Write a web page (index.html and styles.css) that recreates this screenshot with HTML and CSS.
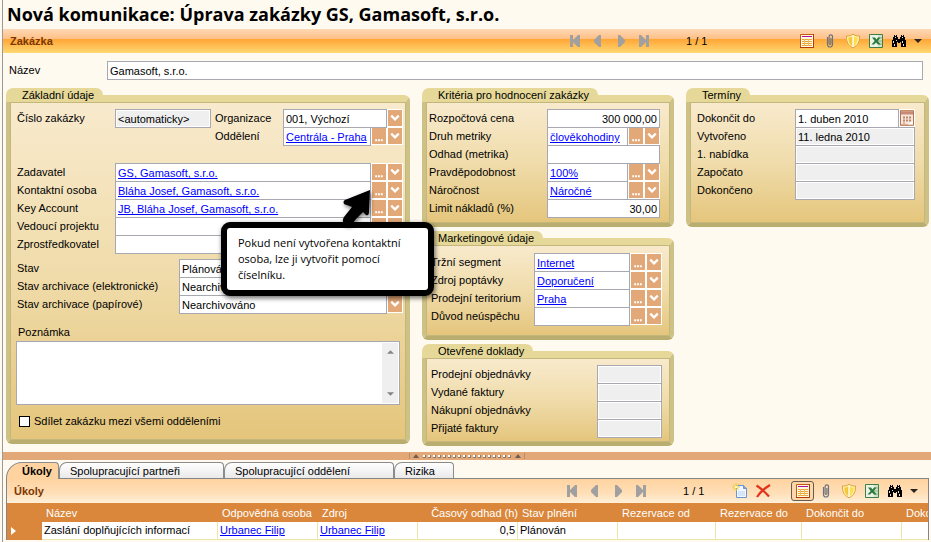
FILE: index.html
```html
<!DOCTYPE html>
<html lang="cs">
<head>
<meta charset="utf-8">
<title>Nová komunikace: Úprava zakázky</title>
<link rel="stylesheet" href="styles.css">
</head>
<body>
<svg class="sprite" aria-hidden="true">
  <symbol id="chev" viewBox="0 0 14 17"><path d="M3 6l4 4 4-4" fill="none" stroke="#fff" stroke-width="2.4"/></symbol>
  <symbol id="dots" viewBox="0 0 14 17"><path d="M3 12h2v2H3zM6 12h2v2H6zM9 12h2v2H9z" fill="#fff"/></symbol>
  <symbol id="first" viewBox="0 0 16 16"><path d="M3 2h3v5l5-5h2v12h-2L6 9v5H3z" fill="#a0a0a0"/></symbol>
  <symbol id="prev" viewBox="0 0 16 16"><path d="M11 2v12h-2L4 9V7l5-5z" fill="#a0a0a0"/></symbol>
  <symbol id="next" viewBox="0 0 16 16"><path d="M5 2v12h2l5-5V7L7 2z" fill="#a0a0a0"/></symbol>
  <symbol id="last" viewBox="0 0 16 16"><path d="M13 2h-3v5L5 2H3v12h2l5-5v5h3z" fill="#a0a0a0"/></symbol>
  <symbol id="form" viewBox="0 0 16 16"><path d="M1.500 1.500h13v13h-13z" fill="#fffbe0" stroke="#c8560c"/><path d="M3 3h10v1H3z" fill="#b010a0"/><path d="M3 6.500h10M3 8.500h10M3 10.500h10M3 12.500h10" stroke="#eba33c"/><path d="M5.500 6v7M9.500 6v7" stroke="#f0b860"/><path d="M14.500 1v13.500H1" fill="none" stroke="#b23a08"/></symbol>
  <symbol id="clip" viewBox="0 0 16 16"><path d="M5.500 4v7.500a2.500 2.500 0 0 0 5 0V3.500a1.700 1.700 0 0 0-3.400 0V10.500a.9.900 0 0 0 1.800 0V5" fill="none" stroke="#6e7380" stroke-width="1.200"/></symbol>
  <symbol id="shield" viewBox="0 0 16 16"><path d="M1.500 3c2.500.3 4.500-.4 6.500-1.800C10 2.600 12 3.300 14.500 3c.3 5.500-1.500 9.500-6.500 11.800C3 12.500 1.200 8.500 1.500 3z" fill="#fff3b0" stroke="#dfa23a"/><path d="M3.300 4.500c1.700 0 3-.4 4.200-1.300v10C4.500 11.500 3.200 8.500 3.300 4.500z" fill="#f3c63c"/><path d="M8.500 3.200c1.200.9 2.500 1.300 4.200 1.300 0 4-1.200 7-4.200 8.700z" fill="#ffdc50"/><path d="M8 3v11" stroke="#fff"/></symbol>
  <symbol id="excel" viewBox="0 0 16 16"><path d="M1.500 1.500h13v13h-13z" fill="#eaf3e6" stroke="#3f7d46"/><path d="M10 2h4v12h-4z" fill="#cfe3cb"/><path d="M10 5h4M10 8h4M10 11h4" stroke="#8ab58b"/><path d="M4 4.500h3l1.500 2 1.500-2h2.500L9.800 8l3 3.500H10L8 9.500l-2 2H3.500L6.700 8z" fill="#2c7a3b"/></symbol>
  <symbol id="find" viewBox="0 0 16 16"><path d="M3 2h3v2h1v2h2V4h1V2h3v2h1v3h1v7h-5V9H9v1H7V9H6v5H1V7h1V4h1z" fill="#000"/><path d="M4 4h1v1H4zM11 4h1v1h-1zM2 8h1v2H2zM3 11h1v2H3zM11 8h1v2h-1zM12 11h1v2h-1zM5 7h1v1H5zM4 2h1v1H4zM11 2h1v1h-1z" fill="#e8e0d0"/></symbol>
  <symbol id="caret" viewBox="0 0 16 16"><path d="M4 6h8l-4 4z" fill="#2b2320"/></symbol>
  <symbol id="new" viewBox="0 0 16 16"><path d="M4.500 2.500h7l3 3v9h-10z" fill="#f2f8ff" stroke="#6b93cc"/><path d="M11.500 2.500v3h3z" fill="#8db4e8" stroke="#6b93cc"/><path d="M6 8h7v5H6z" fill="#d5e6fb"/><path d="M4 0v8M0 4h8M1.200 1.200l5.600 5.600M6.800 1.200L1.200 6.800" stroke="#edcb34"/><path d="M3 3h2v2H3z" fill="#fffcd0"/></symbol>
  <symbol id="del" viewBox="0 0 16 16"><path d="M1.500 2.500c4 2.500 8.500 6.500 12.500 11M15 2C10 5 5 9.500 2 14" fill="none" stroke="#e0341c" stroke-width="2.200"/></symbol>
  <symbol id="cal" viewBox="0 0 14 15"><path d="M.5.500h13v14H.5z" fill="#f7e6da" stroke="#b2715a"/><path d="M1 1h12v3H1z" fill="#c88a74"/><path d="M3 6h2v2H3zM6 6h2v2H6zM9 6h2v2H9zM3 9h2v2H3zM6 9h2v2H6zM9 9h2v2H9zM3 12h2v1H3z" fill="#c0836c"/><path d="M13 10v4H8z" fill="#fff"/></symbol>
</svg>

<main class="page">
  <h1 class="title">Nová komunikace: Úprava zakázky GS, Gamasoft, s.r.o.</h1>

  <div class="bar bar-main">
    <h2 class="bar-title">Zakázka</h2>
    <div class="tools">
      <button class="tool" aria-label="První"><svg><use href="#first"/></svg></button>
      <button class="tool" aria-label="Předchozí"><svg><use href="#prev"/></svg></button>
      <button class="tool" aria-label="Další"><svg><use href="#next"/></svg></button>
      <button class="tool" aria-label="Poslední"><svg><use href="#last"/></svg></button>
    </div>
    <span class="count count-wide">1 / 1</span>
    <div class="tools">
      <button class="tool" aria-label="Formulář"><svg><use href="#form"/></svg></button>
      <button class="tool" aria-label="Přílohy"><svg><use href="#clip"/></svg></button>
      <button class="tool" aria-label="Práva"><svg><use href="#shield"/></svg></button>
      <button class="tool" aria-label="Excel"><svg><use href="#excel"/></svg></button>
      <button class="tool" aria-label="Hledat"><svg><use href="#find"/></svg></button>
      <button class="tool tool-caret" aria-label="Více"><svg><use href="#caret"/></svg></button>
    </div>
  </div>

  <div class="name-row">
    <label for="name">Název</label>
    <input class="field" id="name" value="Gamasoft, s.r.o.">
  </div>

  <div class="columns">
    <section class="panel">
      <h3 class="panel-tab">Základní údaje</h3>
      <div class="panel-body basic">
        <div class="row split">
          <label for="num">Číslo zakázky</label><input class="field readonly" id="num" value="&lt;automaticky&gt;" readonly>
          <label for="org">Organizace</label><select class="field" id="org"><option>001, Výchozí</option></select><span class="btn"><svg><use href="#chev"/></svg></span>
        </div>
        <div class="row split">
          <span></span><span></span>
          <label for="odd">Oddělení</label><div class="field"><a href="#">Centrála - Praha</a></div><button class="btn" id="odd"><svg><use href="#dots"/></svg></button><button class="btn" aria-label="Rozbalit"><svg><use href="#chev"/></svg></button>
        </div>
        <div class="row gap-above">
          <label for="zad">Zadavatel</label><div class="field"><a href="#">GS, Gamasoft, s.r.o.</a></div><button class="btn" id="zad"><svg><use href="#dots"/></svg></button><button class="btn" aria-label="Rozbalit"><svg><use href="#chev"/></svg></button>
        </div>
        <div class="row">
          <label for="kon">Kontaktní osoba</label><div class="field"><a href="#">Bláha Josef, Gamasoft, s.r.o.</a></div><button class="btn" id="kon"><svg><use href="#dots"/></svg></button><button class="btn" aria-label="Rozbalit"><svg><use href="#chev"/></svg></button>
        </div>
        <div class="row">
          <label for="key">Key Account</label><div class="field"><a href="#">JB, Bláha Josef, Gamasoft, s.r.o.</a></div><button class="btn" id="key"><svg><use href="#dots"/></svg></button><button class="btn" aria-label="Rozbalit"><svg><use href="#chev"/></svg></button>
        </div>
        <div class="row">
          <label for="ved">Vedoucí projektu</label><input class="field" id="ved"><button class="btn" aria-label="Vybrat"><svg><use href="#dots"/></svg></button><button class="btn" aria-label="Rozbalit"><svg><use href="#chev"/></svg></button>
        </div>
        <div class="row">
          <label for="zpr">Zprostředkovatel</label><input class="field" id="zpr"><button class="btn" aria-label="Vybrat"><svg><use href="#dots"/></svg></button><button class="btn" aria-label="Rozbalit"><svg><use href="#chev"/></svg></button>
        </div>
        <div class="states">
          <div class="row"><label for="st">Stav</label><select class="field" id="st"><option>Plánováno</option></select><span class="btn"><svg><use href="#chev"/></svg></span></div>
          <div class="row"><label for="se">Stav archivace (elektronické)</label><select class="field" id="se"><option>Nearchivováno</option></select><span class="btn"><svg><use href="#chev"/></svg></span></div>
          <div class="row"><label for="sp">Stav archivace (papírové)</label><select class="field" id="sp"><option>Nearchivováno</option></select><span class="btn"><svg><use href="#chev"/></svg></span></div>
        </div>
        <label class="note-label" for="note">Poznámka</label>
        <div class="note">
          <textarea id="note"></textarea>
          <div class="scroll" aria-hidden="true"><svg viewBox="0 0 8 5"><path d="M0 5l4-4 4 4z"/></svg><svg viewBox="0 0 8 5"><path d="M0 0l4 4 4-4z"/></svg></div>
        </div>
        <label class="share"><input type="checkbox">Sdílet zakázku mezi všemi odděleními</label>
      </div>
    </section>

    <div class="stack">
      <section class="panel">
        <h3 class="panel-tab">Kritéria pro hodnocení zakázky</h3>
        <div class="panel-body criteria">
          <div class="row"><label for="cena">Rozpočtová cena</label><input class="field num" id="cena" value="300 000,00"></div>
          <div class="row"><label for="druh">Druh metriky</label><div class="field"><a href="#">člověkohodiny</a></div><button class="btn" id="druh"><svg><use href="#dots"/></svg></button><button class="btn" aria-label="Rozbalit"><svg><use href="#chev"/></svg></button></div>
          <div class="row"><label for="odh">Odhad (metrika)</label><input class="field" id="odh"></div>
          <div class="row"><label for="pra">Pravděpodobnost</label><div class="field"><a href="#">100%</a></div><button class="btn" id="pra"><svg><use href="#dots"/></svg></button><button class="btn" aria-label="Rozbalit"><svg><use href="#chev"/></svg></button></div>
          <div class="row"><label for="nar">Náročnost</label><div class="field"><a href="#">Náročné</a></div><button class="btn" id="nar"><svg><use href="#dots"/></svg></button><button class="btn" aria-label="Rozbalit"><svg><use href="#chev"/></svg></button></div>
          <div class="row"><label for="lim">Limit nákladů (%)</label><input class="field num" id="lim" value="30,00"></div>
        </div>
      </section>
      <section class="panel">
        <h3 class="panel-tab">Marketingové údaje</h3>
        <div class="panel-body marketing">
          <div class="row"><label for="trz">Tržní segment</label><div class="field"><a href="#">Internet</a></div><button class="btn" id="trz"><svg><use href="#dots"/></svg></button><button class="btn" aria-label="Rozbalit"><svg><use href="#chev"/></svg></button></div>
          <div class="row"><label for="zdr">Zdroj poptávky</label><div class="field"><a href="#">Doporučení</a></div><button class="btn" id="zdr"><svg><use href="#dots"/></svg></button><button class="btn" aria-label="Rozbalit"><svg><use href="#chev"/></svg></button></div>
          <div class="row"><label for="ter">Prodejní teritorium</label><div class="field"><a href="#">Praha</a></div><button class="btn" id="ter"><svg><use href="#dots"/></svg></button><button class="btn" aria-label="Rozbalit"><svg><use href="#chev"/></svg></button></div>
          <div class="row"><label for="duv">Důvod neúspěchu</label><input class="field" id="duv"><button class="btn" aria-label="Vybrat"><svg><use href="#dots"/></svg></button><button class="btn" aria-label="Rozbalit"><svg><use href="#chev"/></svg></button></div>
        </div>
      </section>
      <section class="panel">
        <h3 class="panel-tab">Otevřené doklady</h3>
        <div class="panel-body documents">
          <div class="row"><label for="d1">Prodejní objednávky</label><input class="field readonly" id="d1" readonly></div>
          <div class="row"><label for="d2">Vydané faktury</label><input class="field readonly" id="d2" readonly></div>
          <div class="row"><label for="d3">Nákupní objednávky</label><input class="field readonly" id="d3" readonly></div>
          <div class="row"><label for="d4">Přijaté faktury</label><input class="field readonly" id="d4" readonly></div>
        </div>
      </section>
    </div>

    <section class="panel">
      <h3 class="panel-tab">Termíny</h3>
      <div class="panel-body dates">
        <div class="row"><label for="t1">Dokončit do</label><input class="field" id="t1" value="1. duben 2010"><button class="btn btn-cal" aria-label="Kalendář"><svg><use href="#cal"/></svg></button></div>
        <div class="row"><label for="t2">Vytvořeno</label><input class="field readonly" id="t2" value="11. ledna 2010" readonly></div>
        <div class="row"><label for="t3">1. nabídka</label><input class="field readonly" id="t3" readonly></div>
        <div class="row"><label for="t4">Započato</label><input class="field readonly" id="t4" readonly></div>
        <div class="row"><label for="t5">Dokončeno</label><input class="field readonly" id="t5" readonly></div>
      </div>
    </section>
  </div>

  <div class="splitter">
    <svg class="grip" viewBox="0 0 116 8" aria-hidden="true"><path d="M.5 1v6M115.500 1v6" stroke="#b98d6a"/><path d="M4 6l3-4 3 4zM106 6l3-4 3 4z" fill="#6d5f55"/><path d="M14 4.500h90" stroke="#8f7a68" stroke-width="3" stroke-dasharray="3 2"/><path d="M14 4h90" stroke="#fff" stroke-width="2" stroke-dasharray="2 3"/></svg>
  </div>

  <nav class="tabs">
    <a class="tab tab-1 active" href="#">Úkoly</a><a class="tab tab-2" href="#">Spolupracující partneři</a><a class="tab tab-3" href="#">Spolupracující oddělení</a><a class="tab tab-4" href="#">Rizika</a>
  </nav>

  <section class="tasks">
    <div class="bar bar-sub">
      <h2 class="bar-title">Úkoly</h2>
      <div class="tools">
        <button class="tool" aria-label="První"><svg><use href="#first"/></svg></button>
        <button class="tool" aria-label="Předchozí"><svg><use href="#prev"/></svg></button>
        <button class="tool" aria-label="Další"><svg><use href="#next"/></svg></button>
        <button class="tool" aria-label="Poslední"><svg><use href="#last"/></svg></button>
      </div>
      <span class="count">1 / 1</span>
      <div class="tools edit-tools">
        <button class="tool" aria-label="Nový"><svg><use href="#new"/></svg></button>
        <button class="tool" aria-label="Smazat"><svg><use href="#del"/></svg></button>
      </div>
      <div class="tools">
        <button class="tool pressed" aria-label="Formulář"><svg><use href="#form"/></svg></button>
        <button class="tool" aria-label="Přílohy"><svg><use href="#clip"/></svg></button>
        <button class="tool" aria-label="Práva"><svg><use href="#shield"/></svg></button>
        <button class="tool" aria-label="Excel"><svg><use href="#excel"/></svg></button>
        <button class="tool" aria-label="Hledat"><svg><use href="#find"/></svg></button>
        <button class="tool tool-caret" aria-label="Více"><svg><use href="#caret"/></svg></button>
      </div>
    </div>
    <div class="table-wrap">
      <table>
        <colgroup><col class="c-mark"><col class="c-name"><col class="c-std"><col class="c-std"><col class="c-std"><col class="c-std"><col class="c-mid"><col class="c-short"><col class="c-std"><col class="c-std"></colgroup>
        <thead><tr><th></th><th>Název</th><th>Odpovědná osoba</th><th>Zdroj</th><th class="num">Časový odhad (h)</th><th>Stav plnění</th><th>Rezervace od</th><th>Rezervace do</th><th>Dokončit do</th><th>Dokončeno</th></tr></thead>
        <tbody><tr><td class="mark"><svg viewBox="0 0 5 8"><path d="M0 0l5 4-5 4z" fill="#fff"/></svg></td><td>Zaslání doplňujících informací</td><td><a href="#">Urbanec Filip</a></td><td><a href="#">Urbanec Filip</a></td><td class="num">0,5</td><td>Plánován</td><td></td><td></td><td></td><td></td></tr></tbody>
      </table>
    </div>
  </section>

  <aside class="callout">
    <svg class="arrow" viewBox="0 0 36 42" aria-hidden="true"><path d="M31 4L6 14c-3 2-1 5 2 5l5 2L5 31c-3 5 0 9 5 8 3-1 5-3 7-6l7-7 3 3c2 1 3-1 3-3z"/></svg>
    <p>Pokud není vytvořena kontaktní osoba, lze ji vytvořit pomocí číselníku.</p>
  </aside>
</main>
</body>
</html>
```
FILE: styles.css
```css
* { box-sizing: border-box; }

body {
  margin: 0;
  background: #fffaf0;
  color: #000;
  font: 11px/18px "Liberation Sans", Arial, sans-serif;
}

h1, h2, h3, p { margin: 0; }
input, select, textarea, button { font: inherit; color: inherit; margin: 0; border-radius: 0; }
button { padding: 0; border: 0; background: none; }
svg { display: block; }
a { color: #00f; }
.sprite { display: none; }

.page {
  position: relative;
  min-height: 100vh;
  margin-left: 2px;
  border-left: 1px solid #9a9a9a;
  overflow: hidden;
}

.title {
  height: 29px;
  padding-left: 4px;
  font: bold 18px/29px "Open Sans", sans-serif;
  white-space: nowrap;
}

.bar { display: flex; align-items: center; height: 24px; padding-right: 5px; }
.bar-main {
  padding-left: 7px;
  background: linear-gradient(#ffd9b5 0, #ffbf85 10px, #ffa535 10px, #ffd873 24px);
}
.bar-sub {
  padding-right: 6px;
  padding-left: 7px;
  background: linear-gradient(#ffd3a0, #ffdfb8 60%, #fff0d8);
}
.bar-title { margin-right: auto; color: #7d3600; font-size: 11px; line-height: 24px; }
.tools { display: flex; }
.tool { display: flex; align-items: center; justify-content: center; width: 23px; height: 20px; }
.tool svg { width: 16px; height: 16px; }
.tool-caret { width: 16px; }
.pressed { border: 1px solid #6b5b4c; border-radius: 3px; background: #fbd7ab; }
.count { width: 76px; padding-left: 31px; }
.count-wide { width: 140px; }
.edit-tools { margin-right: 17px; }

.name-row { display: flex; padding: 8px 8px 8px 6px; }
.name-row label { width: 98px; }

.field {
  flex: 1;
  min-width: 0;
  width: 0;
  height: 19px;
  padding: 0 2px;
  border: 1px solid #a8a8b0;
  background: #fff;
  line-height: 18px;
  white-space: nowrap;
  overflow: hidden;
  appearance: none;
  outline: none;
}
.readonly { background: #efefef; box-shadow: inset 0 0 0 1px #fff; }
.num { text-align: right; }

.columns {
  display: grid;
  grid-template-columns: 404fr 252fr 243fr;
  gap: 12px;
  align-items: start;
  padding: 0 2px 0 3px;
}
.stack { display: grid; gap: 4px; }

.panel-tab {
  position: relative;
  width: fit-content;
  height: 14px;
  margin-bottom: -7px;
  padding: 0 9px 0 16px;
  border-radius: 7px 7px 0 0;
  background: #e5d898;
  font-size: 11px;
  font-weight: normal;
  line-height: 15px;
}
.panel-body {
  padding: 6px 10px 9px 3px;
  border: 4px solid #cec186;
  border-top: 7px solid #e5d898;
  border-bottom-color: #b9ad70;
  border-radius: 6px;
  background: linear-gradient(#f8eacd, #f0dcab 50%, #e4c57b);
  box-shadow: inset 0 0 0 1px #c5b77b;
}
.row { display: flex; height: 18px; }
.row label { flex: none; width: 118px; white-space: nowrap; }
.row .field { position: relative; }

.btn {
  flex: none;
  width: 16px;
  height: 18px;
  border: 1px solid #fff;
  background: #e2a877;
}
.btn svg { width: 14px; height: 16px; }

.basic { padding: 7px 3px 10px 7px; }
.basic .row label { width: 98px; }
.basic .split { display: grid; grid-template-columns: 98px 96px 72px 1fr auto auto; }
.basic .split .field { width: auto; }
.basic .split select { grid-column: 4 / 6; }
.basic .split label:nth-of-type(2), .basic .split span + label { padding-left: 4px; }
.gap-above { margin-top: 18px; }
.states { margin-top: 6px; }
.basic .states label { width: 162px; }
.note-label { display: block; margin-top: 10px; padding-left: 1px; }
.note { display: flex; height: 64px; margin: 0 3px 0 -1px; border: 1px solid #a8a8b0; background: #fff; }
.note textarea { flex: 1; border: 0; padding: 2px; background: none; resize: none; outline: none; }
.scroll {
  display: flex;
  flex-direction: column;
  justify-content: space-between;
  align-items: center;
  width: 16px;
  margin: 1px;
  padding: 6px 0;
  background: #efefef;
}
.scroll svg { width: 7px; height: 5px; fill: #858585; }
.share { display: flex; align-items: center; gap: 4px; margin-top: 7px; padding-left: 2px; }
.share input { appearance: none; width: 11px; height: 11px; border: 1px solid #000; background: #fff; }

.criteria { padding-top: 7px; padding-bottom: 6px; }
.criteria .row label { width: 118px; }
.marketing, .documents { padding: 8px 8px 11px 5px; }
.marketing .row label { width: 103px; }
.documents { padding-top: 7px; padding-bottom: 5px; }
.documents .row label { width: 166px; }
.dates { padding: 7px 10px 24px 7px; }
.dates .row label { width: 98px; }

.splitter { display: flex; justify-content: center; height: 8px; margin-top: 6px; background: #e2a877; }
.grip { width: 116px; height: 8px; }

.tabs { display: flex; height: 17px; margin-top: 2px; padding-left: 3px; }
.tab {
  height: 16px;
  border: 1px solid #8b8b8b;
  border-bottom: 0;
  border-radius: 8px 4px 0 0;
  background: linear-gradient(#fff, #e9e9e9);
  color: #000;
  line-height: 17px;
  text-decoration: none;
  white-space: nowrap;
  padding-left: 10px;
}
.tab-1 { width: 53px; padding-left: 15px; }
.tab-2 { width: 165px; }
.tab-3 { width: 170px; }
.tab-4 { width: 60px; }
.active { position: relative; z-index: 1; height: 17px; border-radius: 16px 4px 0 0; background: #ffd3a0; font-weight: bold; }

.tasks { margin: -1px 2px 0 3px; border: 1px solid #858585; border-bottom: 0; }
.table-wrap { overflow: hidden; }
table { width: 995px; border-collapse: separate; border-spacing: 0; table-layout: fixed; }
.c-mark { width: 35px; }
.c-name { width: 176px; }
.c-std { width: 100px; }
.c-mid { width: 98px; }
.c-short { width: 86px; }
th {
  height: 19px;
  padding: 0 4px;
  background: #da873b;
  color: #fff;
  font-weight: normal;
  line-height: 18px;
  text-align: left;
  white-space: nowrap;
}
td {
  height: 18px;
  padding: 0 2px;
  border-right: 1px solid #ede5a5;
  border-bottom: 1px solid #ede5a5;
  background: #fff;
  line-height: 17px;
  white-space: nowrap;
}
th.num { padding-right: 0; text-align: right; }
.mark { padding-left: 4px; border: 0; background: #da873b; }
.mark svg { width: 5px; height: 8px; }

.callout {
  position: absolute;
  left: 218px;
  top: 222px;
  width: 213px;
  padding: 7px 11px;
  border: 6px solid #000;
  border-radius: 9px;
  background: #fff;
  box-shadow: 1px 2px 5px #0009;
  font: 11px/16px "Open Sans", sans-serif;
}
.arrow { position: absolute; left: 112px; top: -42px; width: 36px; height: 42px; filter: drop-shadow(1px 2px 2px #0008); }
```
